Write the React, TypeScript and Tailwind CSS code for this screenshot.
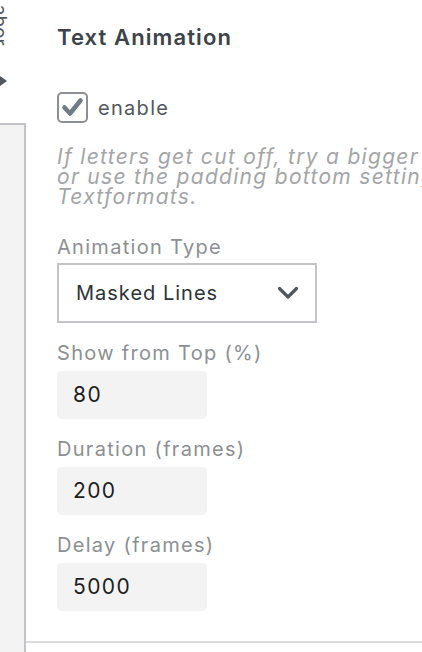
import React from "react"

function Field({ label, value }: { label: string; value: string }) {
  return (
    <div className="mt-[18px]">
      <div className="text-[20px] leading-[24px] tracking-[1.3px] text-[#8c8f94]">{label}</div>
      <div className="mt-[6px] flex h-[48px] w-[150px] items-center rounded-[5px] bg-[#f3f3f3] px-[16px] text-[21px] tracking-[1.4px] text-[#1e1e1e]">
        {value}
      </div>
    </div>
  )
}

export default function App() {
  return (
    <div
      className="flex h-[652px] w-[422px] overflow-hidden bg-white"
      style={{ fontFamily: "Inter, 'Noto Sans', sans-serif" }}
    >
      {/* side tab strip */}
      <div className="flex w-[26px] shrink-0 flex-col">
        <div className="flex h-[123px] flex-col items-start overflow-hidden">
          <div className="-ml-[13px] -mt-[6px] text-[19px] leading-[24px] text-[#50575e] [writing-mode:vertical-rl]">
            Labor
          </div>
          <svg width="8" height="10" viewBox="0 0 8 10" className="mt-[30px]">
            <path d="M0 0 L7 5 L0 10 Z" fill="#50575e" />
          </svg>
        </div>
        <div className="flex-1 border-t-2 border-r-2 border-[#c3c4c7] bg-[#f3f3f3]" />
      </div>

      {/* panel */}
      <div className="flex min-w-0 flex-1 flex-col">
        <div className="pl-[31px]">
          <h2 className="pt-[23px] text-[22px] font-semibold leading-[28px] tracking-[1.1px] text-[#3c434a]">
            Text Animation
          </h2>

          <label className="mt-[41px] flex items-center gap-[10px]">
            <span className="flex h-[31px] w-[31px] items-center justify-center rounded-[5px] border-2 border-[#8c8f94]">
              <svg width="27" height="27" viewBox="0 0 27 27">
                <path d="M5.5 13.5 L11 19.5 L21.5 6.5" fill="none" stroke="#6f7b87" strokeWidth="4.5" strokeLinecap="round" strokeLinejoin="round" />
              </svg>
            </span>
            <span className="text-[20px] tracking-[1.3px] text-[#50575e]">enable</span>
          </label>

          <p className="mt-[24px] whitespace-nowrap text-[21px] italic leading-[20px] tracking-[1.3px] text-[#a3a5a8]">
            If letters get cut off, try a bigger
            <br />
            or use the padding bottom setting
            <br />
            Textformats.
          </p>

          <div className="mt-[28px] text-[20px] leading-[24px] tracking-[1.3px] text-[#8c8f94]">Animation Type</div>
          <div className="mt-[4px] flex h-[60px] w-[260px] items-center justify-between border-2 border-[#c3c4c7] pl-[17px] pr-[16px]">
            <span className="text-[20px] tracking-[1px] text-[#2c3338]">Masked Lines</span>
            <svg width="22" height="14" viewBox="0 0 22 14">
              <path d="M2.5 2.5 L11 11 L19.5 2.5" fill="none" stroke="#50575e" strokeWidth="3.2" strokeLinecap="round" strokeLinejoin="round" />
            </svg>
          </div>

          <div className="mt-[3px]">
            <Field label="Show from Top (%)" value="80" />
            <Field label="Duration (frames)" value="200" />
            <Field label="Delay (frames)" value="5000" />
          </div>
        </div>
        <div className="mt-[30px] border-b-2 border-[#dcdcde]" />
      </div>
    </div>
  )
}
